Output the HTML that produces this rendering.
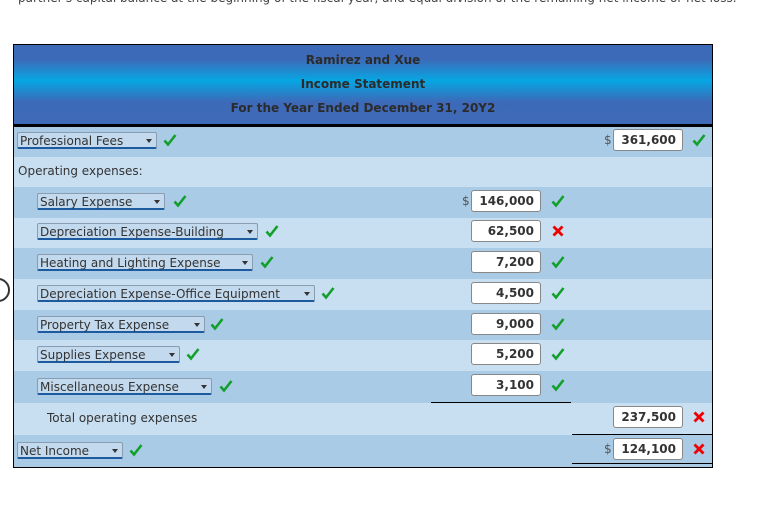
<!DOCTYPE html>
<html><head><style>
body{margin:0;width:760px;height:513px;background:#fff;position:relative;overflow:hidden;font-family:"DejaVu Sans","Liberation Sans",sans-serif;font-size:12px;color:#333}
.a{position:absolute}
.tbl{left:13px;top:44px;width:698px;height:422px;border:1px solid #000}
.hdr{left:0;top:0;width:698px;height:79px;background:linear-gradient(#3d6ab8 0%,#3d6ab8 18%,#06a6e3 45%,#3d6ab8 72%,#3e6ab7 100%);border-bottom:3px solid #000}
.h{left:0;width:698px;text-align:center;font-weight:bold;font-size:12px;color:#2b2b2b}
.row{left:0;width:698px}
.d{background:#a9cbe6}.l{background:#c8dff2}
.sel{height:17px;line-height:17px;border:1px solid #8a9cb0;border-bottom:2px solid #1d5a9e;border-radius:2px;background:#c3d9ed;padding-left:2px;color:#333;box-sizing:border-box;font-size:12px}
.sel:after{content:"";position:absolute;right:4px;top:6px;border-left:3px solid transparent;border-right:3px solid transparent;border-top:4px solid #333}
.box{width:70px;height:22px;background:#fff;border:1px solid #888;border-radius:3px;box-sizing:border-box;text-align:right;padding-right:6px;line-height:20px;font-weight:bold;font-size:12px;color:#333}
.ck,.x{width:14px;height:14px}
.dol{color:#555;font-size:12px}
</style></head><body>
<svg width="0" height="0" style="position:absolute"><defs>
<symbol id="c" viewBox="0 0 14 14"><path d="M1.5 7.5 L5 11.5 L12.5 2" fill="none" stroke="#12a02a" stroke-width="2.6"/></symbol>
<symbol id="xx" viewBox="0 0 14 14"><path d="M2.5 2.5 L11.5 11.5 M11.5 2.5 L2.5 11.5" fill="none" stroke="#ee0000" stroke-width="2.8"/></symbol>
</defs></svg>
<div class="a" style="left:18px;top:-9px;color:#444;font-size:12px">partner's capital balance at the beginning of the fiscal year, and equal division of the remaining net income or net loss.</div>
<div class="a tbl">
<div class="a hdr">
<div class="a h" style="top:8px">Ramirez and Xue</div>
<div class="a h" style="top:32px">Income Statement</div>
<div class="a h" style="top:56px">For the Year Ended December 31, 20Y2</div>
</div>
<div class="a row d" style="top:82px;height:30px"></div>
<div class="a row l" style="top:112px;height:30px"></div>
<div class="a row d" style="top:142px;height:31px"></div>
<div class="a row l" style="top:173px;height:30px"></div>
<div class="a row d" style="top:203px;height:31px"></div>
<div class="a row l" style="top:234px;height:31px"></div>
<div class="a row d" style="top:265px;height:30px"></div>
<div class="a row l" style="top:295px;height:31px"></div>
<div class="a row d" style="top:326px;height:32px"></div>
<div class="a row l" style="top:358px;height:32px"></div>
<div class="a row d" style="top:390px;height:32px"></div>
<div class="a" style="left:417px;top:357px;width:140px;border-top:1px solid #000"></div>
<div class="a" style="left:558px;top:389px;width:140px;border-top:1px solid #000"></div>
<div class="a" style="left:558px;top:418px;width:140px;border-top:1px solid #000"></div>
</div>

<div class="a sel" style="left:17px;top:132px;width:140px">Professional Fees</div><svg class="a ck" style="left:163px;top:133px"><use href="#c"/></svg>
<div class="a" style="left:18px;top:164px">Operating expenses:</div>
<div class="a sel" style="left:37px;top:193px;width:128px">Salary Expense</div><svg class="a ck" style="left:173px;top:194px"><use href="#c"/></svg>
<div class="a sel" style="left:37px;top:223px;width:221px">Depreciation Expense-Building</div><svg class="a ck" style="left:265px;top:224px"><use href="#c"/></svg>
<div class="a sel" style="left:37px;top:254px;width:216px">Heating and Lighting Expense</div><svg class="a ck" style="left:260px;top:255px"><use href="#c"/></svg>
<div class="a sel" style="left:37px;top:285px;width:278px">Depreciation Expense-Office Equipment</div><svg class="a ck" style="left:321px;top:286px"><use href="#c"/></svg>
<div class="a sel" style="left:37px;top:316px;width:168px">Property Tax Expense</div><svg class="a ck" style="left:210px;top:317px"><use href="#c"/></svg>
<div class="a sel" style="left:37px;top:346px;width:143px">Supplies Expense</div><svg class="a ck" style="left:186px;top:347px"><use href="#c"/></svg>
<div class="a sel" style="left:37px;top:378px;width:175px">Miscellaneous Expense</div><svg class="a ck" style="left:219px;top:379px"><use href="#c"/></svg>
<div class="a" style="left:47px;top:411px">Total operating expenses</div>
<div class="a sel" style="left:17px;top:442px;width:106px">Net Income</div><svg class="a ck" style="left:129px;top:443px"><use href="#c"/></svg>

<span class="a dol" style="left:604px;top:133px">$</span><div class="a box" style="left:613px;top:129px">361,600</div><svg class="a ck" style="left:692px;top:133px"><use href="#c"/></svg>
<span class="a dol" style="left:462px;top:194px">$</span><div class="a box" style="left:471px;top:190px">146,000</div><svg class="a ck" style="left:551px;top:194px"><use href="#c"/></svg>
<div class="a box" style="left:471px;top:220px">62,500</div><svg class="a x" style="left:551px;top:224px"><use href="#xx"/></svg>
<div class="a box" style="left:471px;top:251px">7,200</div><svg class="a ck" style="left:551px;top:255px"><use href="#c"/></svg>
<div class="a box" style="left:471px;top:282px">4,500</div><svg class="a ck" style="left:551px;top:286px"><use href="#c"/></svg>
<div class="a box" style="left:471px;top:313px">9,000</div><svg class="a ck" style="left:551px;top:317px"><use href="#c"/></svg>
<div class="a box" style="left:471px;top:343px">5,200</div><svg class="a ck" style="left:551px;top:347px"><use href="#c"/></svg>
<div class="a box" style="left:471px;top:374px">3,100</div><svg class="a ck" style="left:551px;top:378px"><use href="#c"/></svg>
<div class="a box" style="left:613px;top:406px">237,500</div><svg class="a x" style="left:692px;top:410px"><use href="#xx"/></svg>
<span class="a dol" style="left:604px;top:442px">$</span><div class="a box" style="left:613px;top:438px">124,100</div><svg class="a x" style="left:692px;top:442px"><use href="#xx"/></svg>
<div class="a" style="left:-14px;top:278px;width:20px;height:20px;border:2px solid #333;border-radius:50%"></div>
</body></html>
